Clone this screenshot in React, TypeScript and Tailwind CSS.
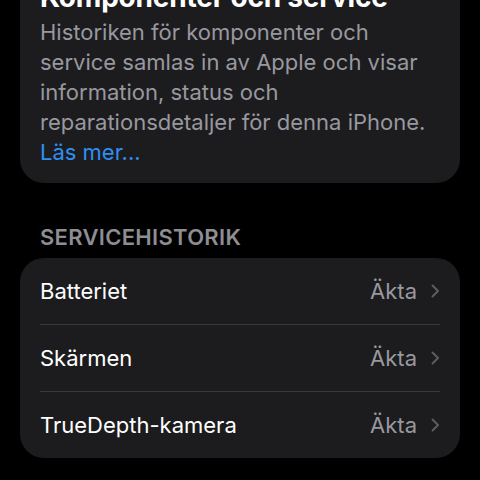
export default function App() {
  const rows = ['Batteriet', 'Skärmen', 'TrueDepth-kamera']
  const lines = [
    'Historiken för komponenter och',
    'service samlas in av Apple och visar',
    'information, status och',
    'reparationsdetaljer för denna iPhone.',
  ]

  return (
    <div
      className="w-[480px] h-[480px] overflow-hidden bg-black"
      style={{ fontFamily: 'Inter, "Noto Sans", sans-serif' }}
    >
      <div className="mx-5 -mt-[40px] rounded-[24px] bg-[#1c1c1e] px-5 pt-5 pb-4">
        <h1 className="text-[28px] leading-[34px] font-bold text-white tracking-[-0.2px]">
          Komponenter och service
        </h1>
        <p className="mt-[3px] text-[22px] leading-[30px] text-[#98989f] whitespace-nowrap">
          {lines.map((l) => (
            <span key={l} className="block">
              {l}
            </span>
          ))}
          <span className="block text-[#2f8ff0]">Läs mer...</span>
        </p>
      </div>

      <h2 className="mt-[40px] px-10 text-[22px] leading-[28px] font-semibold text-[#8d8d93] tracking-[0.3px]">
        SERVICEHISTORIK
      </h2>

      <div className="mx-5 mt-[7px] rounded-[24px] bg-[#1c1c1e]">
        {rows.map((name, i) => (
          <div
            key={name}
            className={
              'mx-5 flex items-center justify-between ' +
              (i < rows.length - 1 ? 'h-[67px] border-b border-[#38383a]' : 'h-[66px]')
            }
          >
            <span className="text-[22px] text-white">{name}</span>
            <div className="flex items-center gap-[14px]">
              <span className="text-[22px] text-[#98989f]">Äkta</span>
              <svg width="9" height="14" viewBox="0 0 9 14" fill="none">
                <path
                  d="M1.5 1.5 L7 7 L1.5 12.5"
                  stroke="#5c5c61"
                  strokeWidth="2"
                  strokeLinecap="round"
                  strokeLinejoin="round"
                />
              </svg>
            </div>
          </div>
        ))}
      </div>
    </div>
  )
}
